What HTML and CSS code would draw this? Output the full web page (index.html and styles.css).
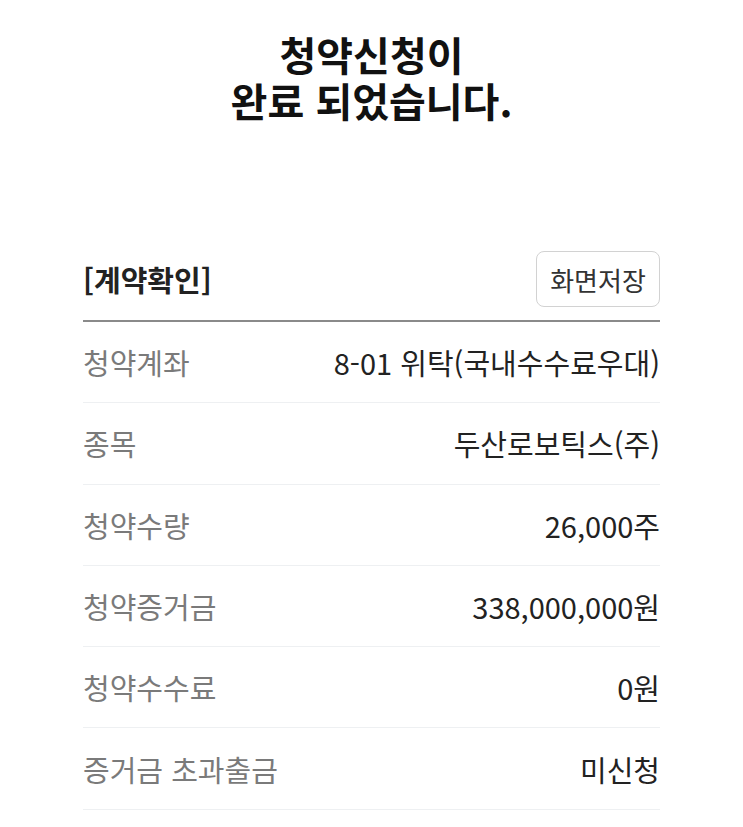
FILE: index.html
```html
<!DOCTYPE html>
<html lang="ko">
<head>
    <meta charset="UTF-8">
    <meta name="viewport" content="width=device-width, initial-scale=1.0">
    <title>청약신청 완료</title>
    <link rel="stylesheet" href="styles.css">
</head>
<body>

<div class="result-page">
    <h1 class="result-title">청약신청이<br>완료 되었습니다.</h1>

    <div class="confirm-header">
        <div class="confirm-label">[계약확인]</div>
        <button class="save-btn">화면저장</button>
    </div>

    <div class="confirm-list">
        <div class="confirm-row">
            <span class="row-label">청약계좌</span>
            <span class="row-value">8-01 위탁(국내수수료우대)</span>
        </div>
        <div class="confirm-row">
            <span class="row-label">종목</span>
            <span class="row-value">두산로보틱스(주)</span>
        </div>
        <div class="confirm-row">
            <span class="row-label">청약수량</span>
            <span class="row-value">26,000주</span>
        </div>
        <div class="confirm-row">
            <span class="row-label">청약증거금</span>
            <span class="row-value">338,000,000원</span>
        </div>
        <div class="confirm-row">
            <span class="row-label">청약수수료</span>
            <span class="row-value">0원</span>
        </div>
        <div class="confirm-row">
            <span class="row-label">증거금 초과출금</span>
            <span class="row-value">미신청</span>
        </div>
    </div>
</div>

</body>
</html>
```

FILE: styles.css
```css
body {
    margin: 0;
    padding: 0;
    background: #fff;
    color: #222;
    font-family: "Noto Sans CJK KR", "Noto Sans", sans-serif;
}

.result-page {
    padding: 31px 83px 0;
}

.result-title {
    margin: 0;
    text-align: center;
    font-size: 40px;
    font-weight: bold;
    line-height: 46px;
    color: #111;
}

.confirm-header {
    display: flex;
    justify-content: space-between;
    align-items: center;
    margin-top: 128px;
    padding-bottom: 13px;
    border-bottom: 2px solid #8a8a8a;
}

.confirm-label {
    font-size: 29px;
    font-weight: bold;
    line-height: 40px;
    color: #222;
}

.save-btn {
    width: 124px;
    height: 56px;
    background: #fff;
    border: 1.5px solid #d2d2d2;
    border-radius: 8px;
    font-family: inherit;
    font-size: 26px;
    color: #333;
    padding: 0;
}

.confirm-row {
    display: flex;
    justify-content: space-between;
    align-items: center;
    height: 81.3px;
    box-sizing: border-box;
    border-bottom: 1.5px solid #eef0f2;
    font-size: 29px;
    line-height: 40px;
}

.row-label {
    color: #7a7a7a;
}

.row-value {
    color: #222;
}
```
